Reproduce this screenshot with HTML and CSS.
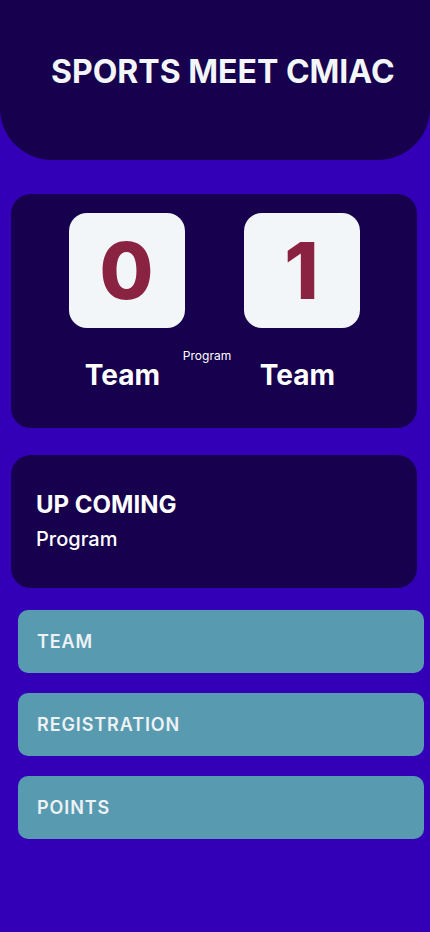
FILE: index.html
```html
<!DOCTYPE html>
<html>
<head>
<meta charset="utf-8">
<link rel="stylesheet" href="styles.css">
</head>
<body>
<header class="header">
  <h1 class="title">SPORTS MEET CMIAC</h1>
</header>
<section class="score-card">
  <div class="scores">
    <div class="team">
      <div class="score-box">0</div>
      <div class="team-name">Team</div>
    </div>
    <div class="mid">Program</div>
    <div class="team">
      <div class="score-box">1</div>
      <div class="team-name">Team</div>
    </div>
  </div>
</section>
<section class="upcoming">
  <div class="up-title">UP COMING</div>
  <div class="up-sub">Program</div>
</section>
<nav class="menu">
  <div class="menu-item">TEAM</div>
  <div class="menu-item">REGISTRATION</div>
  <div class="menu-item">POINTS</div>
</nav>
</body>
</html>
```
FILE: styles.css
```css
* { box-sizing: border-box; }
html, body {
  margin: 0;
  padding: 0;
}
body {
  width: 430px;
  min-height: 932px;
  background: #3300b7;
  font-family: Inter, "Noto Sans", sans-serif;
  color: #f4f6f8;
}
.header {
  height: 160px;
  background: #17004d;
  border-radius: 0 0 52px 52px;
  display: flex;
  justify-content: flex-start;
  padding: 52px 0 0 51px;
}
.title {
  margin: 0;
  font-size: 32px;
  font-weight: 700;
  line-height: 40px;
  letter-spacing: 0;
  color: #f3f6f8;
}
.score-card {
  margin: 34px 13px 0 11px;
  height: 234px;
  background: #17004d;
  border-radius: 20px;
  padding-top: 19px;
}
.scores {
  display: flex;
  justify-content: center;
  align-items: flex-start;
}
.team {
  width: 116px;
  display: flex;
  flex-direction: column;
  align-items: center;
}
.score-box {
  width: 116px;
  height: 115px;
  background: #f3f6f8;
  border-radius: 18px;
  color: #8a2341;
  font-size: 78px;
  font-weight: 800;
  display: flex;
  align-items: center;
  justify-content: center;
  line-height: 1;
}
.team-name {
  margin-top: 30px;
  margin-right: 8px;
  font-size: 28px;
  font-weight: 700;
  line-height: 34px;
  color: #ffffff;
}
.mid {
  width: 59px;
  margin-top: 136px;
  padding-right: 14px;
  text-align: center;
  font-size: 12px;
  line-height: 14px;
  white-space: nowrap;
  display: flex;
  justify-content: center;
  color: #ffffff;
}
.upcoming {
  margin: 27px 13px 0 11px;
  height: 133px;
  background: #17004d;
  border-radius: 20px;
  padding: 35px 25px 0;
}
.up-title {
  font-size: 24px;
  font-weight: 700;
  line-height: 30px;
  color: #ffffff;
}
.up-sub {
  margin-top: 6px;
  font-size: 20px;
  font-weight: 500;
  line-height: 26px;
  color: #ffffff;
}
.menu {
  margin: 22px 6px 0 18px;
  display: flex;
  flex-direction: column;
  gap: 20px;
}
.menu-item {
  height: 63px;
  background: #589bb1;
  border-radius: 10px;
  padding-left: 19px;
  display: flex;
  align-items: center;
  font-size: 18px;
  font-weight: 600;
  letter-spacing: 0.9px;
  color: #eef2f4;
}
```
